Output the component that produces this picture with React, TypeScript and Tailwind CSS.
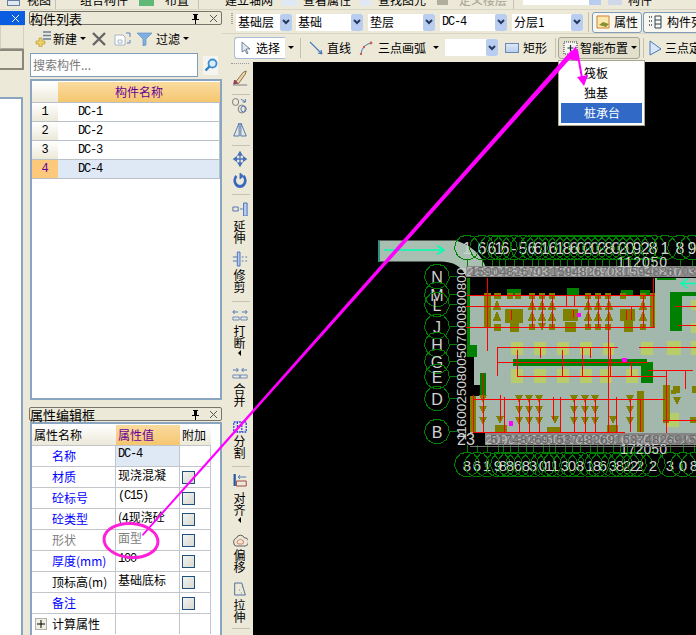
import type { ReactNode } from "react";

const CJK = "font-['Noto_Sans_CJK_SC','Liberation_Sans',sans-serif]";
const GREEN = "#008000";
const RED = "#ff0000";
const OLIVE = "#808000";
const PALE = "#b8cc6a";
const LABEL = "#d2d2d2";

const topAxis: [number, string][] = [
  [467, "1"], [482, "6"], [492, "6"], [499, "1"], [505, "6"], [514, "-"], [523, "5"], [532, "6"], [538, "6"], [545, "1"], [553, "6"], [560, "1"], [567, "8"],
  [574, "6"], [581, "0"], [588, "2"], [595, "0"], [602, "2"], [609, "8"], [616, "0"], [623, "2"], [630, "0"], [637, "9"], [645, "2"], [653, "8"], [665, "1"], [680, "8"], [692, "9"],
];
const bottomAxis: [number, string][] = [
  [467, "8"], [477, "6"], [487, "1"], [498, "9"], [503, "8"], [510, "8"], [518, "6"], [526, "8"], [533, "3"], [543, "0"], [549, "1"], [555, "1"], [565, "3"], [572, "0"],
  [580, "8"], [590, "1"], [597, "8"], [603, "6"], [613, "3"], [620, "8"], [627, "2"], [634, "2"], [640, "2"], [653, "2"], [670, "3"], [683, "0"], [694, "8"],
];
const leftAxis: [number, string][] = [
  [277, "N"], [295, "M"], [305, "L"], [327, "J"], [345, "H"], [362, "G"], [377, "E"], [399, "D"], [432, "B"],
];

// [x1, y1, x2, y2]
const redLines = [
  [467, 295.5, 655, 295.5], [466, 306.5, 652, 306.5], [675, 306.5, 696, 306.5], [466, 327.5, 655, 327.5], [678, 325.5, 696, 325.5],
  [487.5, 278, 487.5, 351], [653.5, 278, 653.5, 328], [608.5, 295, 608.5, 432], [498, 347.5, 618, 347.5], [639, 347.5, 696, 347.5],
  [532.5, 295, 532.5, 327], [542.5, 295, 542.5, 327], [552.5, 295, 552.5, 327], [511.5, 310, 511.5, 320], [566.5, 295, 566.5, 306],
  [588.5, 295, 588.5, 327], [598.5, 295, 598.5, 327], [643.5, 295, 643.5, 327], [631.5, 306, 631.5, 320], [626, 310, 626, 320],
  [574.5, 295, 574.5, 306], [573.5, 310, 573.5, 318], [497.5, 347, 497.5, 376], [540.5, 347, 540.5, 358], [590.5, 347, 590.5, 358],
  [498, 362.5, 648, 362.5], [517.5, 350, 517.5, 376], [517, 376.5, 666, 376.5], [666.5, 370, 666.5, 435], [648, 370.5, 693, 370.5],
  [473, 399.5, 665, 399.5], [473, 432.5, 625, 432.5], [473.5, 395, 473.5, 432], [483.5, 373, 483.5, 432], [500.5, 395, 500.5, 420],
  [504.5, 397, 504.5, 432], [553.5, 397, 553.5, 420], [560.5, 397, 560.5, 432], [519.5, 400, 519.5, 432], [529.5, 400, 529.5, 432],
  [539.5, 400, 539.5, 432], [574.5, 400, 574.5, 432], [585.5, 400, 585.5, 432], [595.5, 400, 595.5, 432], [608.5, 397, 608.5, 413],
  [616.5, 397, 616.5, 432], [630.5, 400, 630.5, 432], [640.5, 400, 640.5, 432], [663, 420.5, 696, 420.5], [685.5, 370, 685.5, 389],
  [562.5, 350, 562.5, 376], [582, 347, 582, 376], [610.5, 347, 610.5, 376], [631.5, 362, 631.5, 376],
];

// [x, y, w, h]
const greenRects = [
  [467, 278, 3, 68], [467, 345, 10, 12], [513, 359, 134, 7], [641, 362, 12, 21], [480, 373, 6, 23], [670, 292, 12, 39],
  [682, 292, 14, 4], [657, 278, 19, 2], [507, 289, 14, 6], [567, 288, 12, 7], [621, 290, 12, 5], [640, 290, 10, 5],
];
const paleRects = [
  [511, 342, 12, 13], [534, 342, 12, 13], [557, 342, 12, 13], [580, 342, 12, 13], [603, 343, 11, 12], [641, 342, 12, 13], [667, 341, 14, 14],
  [511, 369, 12, 14], [534, 369, 12, 14], [557, 369, 12, 14], [580, 369, 12, 14], [600, 369, 12, 14], [626, 369, 12, 14],
  [667, 413, 12, 14], [691, 300, 5, 10], [691, 323, 5, 10], [691, 341, 5, 14],
];
const oliveRects = [
  [484, 293, 7, 34], [494, 293, 7, 6], [494, 324, 7, 7], [507, 293, 6, 6], [515, 293, 6, 6], [529, 293, 6, 6], [539, 293, 6, 6], [549, 293, 6, 6],
  [585, 293, 6, 6], [595, 293, 6, 6], [605, 293, 6, 6], [620, 293, 6, 6], [640, 293, 6, 6], [650, 293, 5, 34], [529, 324, 6, 6], [549, 324, 6, 6],
  [585, 324, 6, 6], [595, 324, 6, 6], [605, 324, 6, 6], [640, 324, 6, 6], [505, 309, 18, 14], [510, 322, 9, 10], [563, 309, 15, 12],
  [565, 322, 11, 10], [620, 309, 15, 12], [624, 320, 9, 12], [470, 396, 6, 36], [637, 391, 7, 41], [495, 425, 12, 7], [547, 427, 13, 5],
  [607, 425, 11, 7], [663, 385, 7, 35], [673, 386, 7, 7], [692, 386, 4, 7], [690, 417, 6, 6], [663, 419, 6, 4], [671, 390, 5, 4],
];
const upTris = [[497, 305], [497, 316], [532, 305], [542, 305], [552, 305], [532, 316], [542, 316], [552, 316], [588, 305], [598, 305], [609, 305], [588, 316], [598, 316], [609, 316], [643, 305], [643, 316]];
const downTris = [
  [483, 399], [483, 410], [483, 421], [519, 399], [529, 399], [539, 399], [519, 410], [529, 410], [539, 410], [519, 421], [529, 421], [539, 421],
  [500, 420], [555, 420], [574, 399], [585, 399], [595, 399], [574, 410], [585, 410], [595, 410], [574, 421], [585, 421], [595, 421], [613, 420],
  [630, 399], [630, 410], [630, 421], [677, 401], [542, 327],
];

const polyPoints = (cx: number, cy: number, r: number) =>
  Array.from({ length: 11 }, (_, i) => {
    const a = (i / 11) * Math.PI * 2 - Math.PI / 2;
    return `${(cx + r * Math.cos(a)).toFixed(1)},${(cy + r * Math.sin(a)).toFixed(1)}`;
  }).join(" ");

const Plan = () => (
  <svg viewBox="253 62 443 573" className="block h-full w-full" shapeRendering="crispEdges">
    <rect x="253" y="62" width="443" height="573" fill="#000" />
    <g shapeRendering="auto">
      <path d="M378 241H456Q484 250 488 277H466Q460 262 440 262H378Z" fill="#a8bfb2" />
    </g>
    <polygon points="467,295 655,295 655,278 696,278 696,433 470,433 470,396 480,396 480,385 474,385 474,345 467,345" fill="#a3b8ac" />
    <rect x="378" y="241" width="2" height="21" fill="#2f8f7f" />
    {greenRects.map(([x, y, w, h], i) => <rect key={i} x={x} y={y} width={w} height={h} fill={GREEN} />)}
    {paleRects.map(([x, y, w, h], i) => <rect key={i} x={x} y={y} width={w} height={h} fill={PALE} />)}
    {oliveRects.map(([x, y, w, h], i) => <rect key={i} x={x} y={y} width={w} height={h} fill={OLIVE} />)}
    {upTris.map(([x, y], i) => <polygon key={i} points={`${x},${y - 5} ${x + 4},${y + 5} ${x - 4},${y + 5}`} fill={OLIVE} />)}
    {downTris.map(([x, y], i) => <polygon key={i} points={`${x - 4},${y - 4} ${x + 4},${y - 4} ${x},${y + 5}`} fill={OLIVE} />)}
    {redLines.map(([x1, y1, x2, y2], i) => <line key={i} x1={x1} y1={y1} x2={x2} y2={y2} stroke={RED} strokeWidth="1" />)}
    <rect x="577" y="313" width="4" height="4" fill="#ff00ff" />
    <rect x="622" y="358" width="5" height="4" fill="#ff00ff" />
    <rect x="509" y="421" width="4" height="5" fill="#ff00ff" />

    <path d="M384 250.5H443M437 246L444 250.5L437 255" stroke="#00ffb4" strokeWidth="1.5" fill="none" shapeRendering="auto" />
    <path d="M696 284H682M688 279L681 284L688 289" stroke="#00ffb4" strokeWidth="1.5" fill="none" shapeRendering="auto" />
    {topAxis.map(([x, t]) => (
      <g key={x}>
        <polygon points={polyPoints(x, 248, 12.5)} fill="none" stroke={GREEN} strokeWidth="1" />
        <line x1={x} y1="260" x2={x} y2="267" stroke={GREEN} strokeWidth="1" />
        <text x={x} y="254" textAnchor="middle" fontFamily="Liberation Sans" fontSize="16" fill={LABEL}>{t}</text>
      </g>
    ))}
    {bottomAxis.map(([x, t]) => (
      <g key={x}>
        <polygon points={polyPoints(x, 465, 12.5)} fill="none" stroke={GREEN} strokeWidth="1" />
        <line x1={x} y1="445" x2={x} y2="453" stroke={GREEN} strokeWidth="1" />
        <text x={x} y="471" textAnchor="middle" fontFamily="Liberation Sans" fontSize="15" fill={LABEL}>{t}</text>
      </g>
    ))}
    {leftAxis.map(([y, t]) => (
      <g key={y}>
        <polygon points={polyPoints(437, y, 12.5)} fill="none" stroke={GREEN} strokeWidth="1" />
        <line x1="449" y1={y} x2="457" y2={y} stroke={GREEN} strokeWidth="1" />
        <text x="437" y={y + 6} textAnchor="middle" fontFamily="Liberation Sans" fontSize="16" fill={LABEL}>{t}</text>
      </g>
    ))}
    <rect x="466" y="266" width="230" height="11" fill="#8a8a8a" />
    <text x="466" y="276" fontFamily="Liberation Sans" fontSize="12" fill="#c4c4c4" textLength="230" lengthAdjust="spacingAndGlyphs">2286006909807008009080963081009</text>
    <text x="470" y="276" fontFamily="Liberation Sans" fontSize="12" fill="#6a6a6a" textLength="226" lengthAdjust="spacingAndGlyphs">1590482670315948267031594826703</text>
    <text x="617" y="267" fontFamily="Liberation Sans" fontSize="14" fill={LABEL} textLength="50">112050</text>
    <rect x="485" y="433" width="211" height="12" fill="#858585" />
    <text x="485" y="444" fontFamily="Liberation Sans" fontSize="12" fill="#bcbcbc" textLength="211" lengthAdjust="spacingAndGlyphs">2090803060100800906030809020</text>
    <text x="490" y="444" fontFamily="Liberation Sans" fontSize="12" fill="#666" textLength="206" lengthAdjust="spacingAndGlyphs">5174826915374826915374826915</text>
    <text x="457" y="445" fontFamily="Liberation Sans" fontSize="16" fill={LABEL}>23</text>
    <text x="620" y="454" fontFamily="Liberation Sans" fontSize="14" fill={LABEL} textLength="47">172050</text>
    <line x1="470" y1="447" x2="696" y2="447" stroke="#777" strokeWidth="1" />
    <text transform="translate(466 441) rotate(-90)" fontFamily="Liberation Sans" fontSize="13" fill={LABEL} textLength="173" lengthAdjust="spacingAndGlyphs">11600250800507000800800</text>
  </svg>
);

const Sep = ({ className = "" }: { className?: string }) => <div className={`mx-[5px] h-[20px] w-px bg-[#c5c2b0] ${className}`} />;
const Caret = ({ className = "" }: { className?: string }) => (
  <span className={`inline-block h-0 w-0 border-x-[3px] border-t-[3px] border-x-transparent border-t-black ${className}`} />
);

const Combo = ({ label, w, mono }: { label: string; w: string; mono?: boolean }) => (
  <div className={`flex h-[17px] items-center justify-between bg-white ${w}`}>
    <span className={`pl-[2px] text-[12px] leading-none ${mono ? "font-['Liberation_Mono'] tracking-[-1.2px]" : ""}`}>{label}</span>
    <span className="flex h-[17px] w-[12px] items-center justify-center rounded-[2px] bg-[#b9cdf0]">
      <svg width="8" height="6" viewBox="0 0 8 6"><path d="M1 1l3 3 3-3" stroke="#23395f" strokeWidth="2" fill="none" /></svg>
    </span>
  </div>
);

const Grip = () => (
  <div className="flex h-[20px] w-[4px] flex-col gap-[1px] pt-[1px]">
    {[0, 1, 2, 3, 4, 5].map((i) => <span key={i} className="h-[1px] w-[2px] bg-[#a8a593]" />)}
  </div>
);

const PanelHeader = ({ title }: { title: string }) => (
  <div className="flex h-[14px] items-center justify-between rounded-[2px] border border-[#77756a] bg-[#ece9d8] pr-[3px]">
    <span className="text-[13px] leading-none">{title}</span>
    <span className="flex items-center gap-[9px]">
      <svg width="9" height="11" viewBox="0 0 9 11"><path d="M2 1h5v1H6v4h2v1H5v4H4V7H1V6h2V2H2z" fill="#000" /></svg>
      <svg width="9" height="9" viewBox="0 0 9 9"><path d="M1 1l7 7M8 1L1 8" stroke="#555" strokeWidth="1" /></svg>
    </span>
  </div>
);

const VTool = ({ icon, text, arrow, mt = "", tm = "mt-[3px]", am = "mt-[4px]" }: { icon: ReactNode; text?: string; arrow?: boolean; mt?: string; tm?: string; am?: string }) => (
  <div className={`flex flex-col items-center ${mt}`}>
    {icon}
    {text && (
      <div className={`flex flex-col items-center text-[12px] leading-[12px] ${tm}`}>
        {text.split("").map((c) => <span key={c}>{c}</span>)}
      </div>
    )}
    {arrow && <span className={`h-0 w-0 border-y-[3px] border-r-[3px] border-y-transparent border-r-black ${am}`} />}
  </div>
);

const HSep = ({ mt }: { mt: string }) => <div className={`ml-[2px] h-px w-[18px] bg-[#c5c2b0] ${mt}`} />;

const BLUE = "#4a72b8";
const toolIcon = (children: ReactNode, h = 16) => (
  <svg width="16" height={h} viewBox={`0 0 18 ${h}`} preserveAspectRatio="none" fill="none" stroke={BLUE} strokeWidth="1">{children}</svg>
);

const Tools = () => (
  <div className="flex w-[31px] flex-col items-center pl-[6px] pr-[2px] pt-[2px]">
    <div className="h-px w-[18px] border-t border-dotted border-[#999]" />
    <VTool mt="mt-[5px]" icon={toolIcon(<><path d="M4 13L13 3l3-1-1 3-8 10z" fill="#e8d7b0" stroke="#8a6d3b" /><path d="M1 16h16" stroke="#777" /><path d="M3 11l3 3-4 1z" fill="#b04060" stroke="#803050" /></>, 17)} />
    <HSep mt="mt-[8px]" />
    <VTool mt="mt-[2px]" icon={toolIcon(<><circle cx="4" cy="5" r="3.5" stroke="#777" /><circle cx="11" cy="12" r="4" stroke="#777" /><circle cx="13" cy="12" r="3" /><path d="M10 2l5 3M15 2v3h-3" /></>, 17)} />
    <VTool mt="mt-[7px]" icon={toolIcon(<><path d="M8 2L2 15h6zM10 2l6 13h-6z" /></>)} />
    <HSep mt="mt-[8px]" />
    <VTool mt="mt-[5px]" icon={toolIcon(<path d="M9 1v14M2 8h14M9 1L7 4h4zM9 15l-2-3h4zM2 8l3-2v4zM16 8l-3-2v4z" fill={BLUE} strokeWidth="1.4" />)} />
    <VTool mt="mt-[5px]" icon={toolIcon(<><path d="M5 4a6 6 0 1 0 8 0" stroke="#3a68c0" strokeWidth="3" /><path d="M9 1l4 3-4 3z" fill="#3a68c0" /></>)} />
    <HSep mt="mt-[6px]" />
    <VTool mt="mt-[7px]" tm="mt-[4px]" text="延伸" icon={toolIcon(<><path d="M13 1h4v13h-4z" fill="#b9cdf0" /><path d="M1 5h6v4H1zM9 7h3" /></>, 14)} />
    <VTool mt="mt-[7px]" tm="mt-[2px]" text="修剪" icon={toolIcon(<><path d="M6 1h3v14H6z" fill="#b9cdf0" /><path d="M1 6h5M1 10h5M11 6h2M11 10h2M15 6h2M15 10h2" /></>)} />
    <HSep mt="mt-[8px]" />
    <VTool mt="mt-[7px]" tm="mt-[4px]" am="mt-[1px]" text="打断" arrow icon={toolIcon(<><path d="M1 3h6M3 1L1 3l2 2M11 3h6M15 1l2 2-2 2" /><path d="M1 8h7v3H1zM10 8h7v3h-7z" stroke="#6a88b8" /></>, 12)} />
    <VTool mt="mt-[11px]" tm="mt-[4px]" text="合并" icon={toolIcon(<><path d="M1 3h6M5 1l2 2-2 2M17 3h-6M13 1l-2 2 2 2" /><path d="M1 8h8v3H1zM9 8h8v3H9z" stroke="#6a88b8" /></>, 12)} />
    <VTool mt="mt-[14px]" tm="mt-[1px]" text="分割" icon={toolIcon(<path d="M2 1h14v10H2zM6 1v10M11 1v10" strokeDasharray="2 1" strokeWidth="1.4" stroke="#2244dd" />, 13)} />
    <HSep mt="mt-[7px]" />
    <VTool mt="mt-[6px]" tm="mt-[5px]" am="mt-[1px]" text="对齐" arrow icon={toolIcon(<><path d="M3 1v12" stroke="#245a9c" strokeWidth="2.5" /><path d="M7 4h9M9 2L7 4l2 2" /><path d="M5 8h11v5H5z" stroke="#a04040" /></>, 14)} />
    <VTool mt="mt-[10px]" tm="mt-[2px]" text="偏移" icon={toolIcon(<><path d="M2 10a4 4 0 0 1 3-5 5 5 0 0 1 9 0 4 4 0 0 1 1 8H5a3 3 0 0 1-3-3z" stroke="#555" /><path d="M6 10a2 2 0 0 1 2-3 2 2 0 0 1 3 0 2 2 0 0 1 0 4H7z" stroke="#e07060" /></>, 14)} />
    <VTool mt="mt-[9px]" text="拉伸" icon={toolIcon(<><path d="M3 1h8l4 12H3z" stroke="#4a6a9a" /><path d="M8 8h1M10 11h1M11 5h1" stroke="#777" /></>, 14)} />
    <HSep mt="mt-[5px]" />
  </div>
);

const Check = () => <div className="h-[13px] w-[13px] border border-[#1c5180] bg-gradient-to-br from-[#f4f4f0] to-[#d8d8d0]" />;

const props = [
  { name: "名称", value: "DC-4", color: "text-[#0000ff]", sel: true, check: false, mono: true },
  { name: "材质", value: "现浇混凝", color: "text-[#0000ff]", check: true },
  { name: "砼标号", value: " (C15)", color: "text-[#0000ff]", check: true, mono: true },
  { name: "砼类型", value: "(4现浇砼", color: "text-[#0000ff]", check: true },
  { name: "形状", value: "面型", color: "text-[#808080]", check: true, gray: true },
  { name: "厚度(mm)", value: "100", color: "text-[#0000ff]", check: true, mono: true },
  { name: "顶标高(m)", value: "基础底标", color: "text-black", check: true },
  { name: "备注", value: "", color: "text-[#0000ff]", check: true },
];

const PropertyTable = () => (
  <div className="ml-[1px] mt-[1px] flex-1 overflow-hidden border-x-2 border-t-2 border-[#8aa5c0] bg-white pt-[1px]">
    <div className="grid w-[179px] grid-cols-[84px_64px_31px] text-[12px] leading-none">
      <div className="flex h-[20px] items-center bg-gradient-to-b from-white to-[#ece9d8] pl-[2px]">属性名称</div>
      <div className="flex h-[20px] items-center bg-gradient-to-b from-[#fadb9f] to-[#f5c66f] pl-[2px] text-[#660099]">属性值</div>
      <div className="flex h-[20px] items-center bg-gradient-to-b from-white to-[#ece9d8] pl-[2px]">附加</div>
      {props.map((p) => (
        <div key={p.name} className="contents">
          <div className={`flex h-[21px] items-center border-r border-t border-[#c2c6ca] pl-[20px] ${p.color}`}>{p.name}</div>
          <div className={`flex h-[21px] items-start border-r border-t border-[#c2c6ca] pl-[2px] pt-[2px] ${p.sel ? "bg-[#dfe8f5]" : ""} ${p.gray ? "text-[#808080]" : ""} ${p.mono ? "font-['Liberation_Mono'] tracking-[-1.2px]" : ""}`}>{p.value}</div>
          <div className="flex h-[21px] items-center border-r border-t border-[#c2c6ca] pl-[2px]">{p.check && <Check />}</div>
        </div>
      ))}
      <div className="flex h-[21px] items-center gap-[5px] border-r border-t border-[#c2c6ca] pl-[3px]">
        <span className="flex h-[12px] w-[12px] items-center justify-center border border-[#b0b0b0] bg-[#f1efe2]">
          <svg width="8" height="8" viewBox="0 0 8 8"><path d="M4 0v8M0 4h8" stroke="#000" /></svg>
        </span>
        计算属性
      </div>
      <div className="h-[21px] border-r border-t border-[#c2c6ca]" />
      <div className="h-[21px] border-r border-t border-[#c2c6ca]" />
    </div>
  </div>
);

const members = ["DC-1", "DC-2", "DC-3", "DC-4"];

const MemberPanel = () => (
  <div className="flex w-[193px] shrink-0 flex-col">
    <PanelHeader title="构件列表" />
    <div className="flex h-[27px] items-center pl-[5px] text-[12px] leading-none">
      <svg width="18" height="16" viewBox="0 0 18 16">
        <path d="M2 10h3V7h3v3h3v3H8v3H5v-3H2z" fill="#f0d060" stroke="#b09030" strokeWidth="0.6" />
        <path d="M9 1h8M9 4.5h8M9 8h8" stroke="#6a7f9a" strokeWidth="1.4" />
      </svg>
      <span className="ml-[1px]">新建</span>
      <Caret className="ml-[3px]" />
      <svg className="ml-[6px]" width="14" height="14" viewBox="0 0 14 14"><path d="M1 1l12 12M13 1L1 13" stroke="#666" strokeWidth="2.4" /></svg>
      <svg className="ml-[8px]" width="17" height="14" viewBox="0 0 17 14"><path d="M1 3h8l2 2v8H1z" fill="#fff" stroke="#a8b4c8" /><path d="M4 8h4v3H4z" fill="none" stroke="#a8b4c8" /><path d="M12 1h4v4M16 8v3h-3" stroke="#5a80c0" fill="none" /></svg>
      <svg className="ml-[6px]" width="15" height="14" viewBox="0 0 15 14"><path d="M0 1h15L9 7v6l-3 1V7z" fill="#7faee0" stroke="#5a88c0" strokeWidth="0.6" /></svg>
      <span className="ml-[4px]">过滤</span>
      <Caret className="ml-[3px]" />
    </div>
    <div className="flex h-[26px] items-center pl-[1px]">
      <div className="flex h-[24px] w-[168px] items-center border border-[#7f9db9] bg-white pl-[2px] text-[12px] leading-none text-[#7a7a7a]">搜索构件...</div>
      <div className="ml-[5px] flex h-[19px] w-[15px] items-center justify-center bg-[#f4f4f0]">
        <svg width="14" height="14" viewBox="0 0 14 14"><circle cx="8.5" cy="5.5" r="4" fill="#d8ecfa" stroke="#3f8fd0" strokeWidth="1.8" /><path d="M5.5 8.5L1.5 12.5" stroke="#2f7fc0" strokeWidth="2.4" /></svg>
      </div>
    </div>
    <div className="ml-[1px] mt-[1px] h-[321px] border-2 border-[#8aa5c0] bg-white pt-[1px]">
      <div className="grid w-[188px] grid-cols-[26px_162px] text-[12px] leading-none">
        <div className="h-[21px] border-b border-[#b9c0c8] bg-gradient-to-b from-white to-[#ece9d8]" />
        <div className="flex h-[21px] items-center justify-center border-b border-[#b9c0c8] bg-gradient-to-b from-[#fadb9f] to-[#f5c66f] text-[#660099]">构件名称</div>
        {members.map((m, i) => {
          const on = i === 3;
          return (
            <div key={m} className="contents">
              <div className={`flex h-[19px] items-center justify-center border-b border-[#b9c0c8] font-['Liberation_Mono'] ${on ? "bg-[#fcc97c] text-[#660099]" : "bg-gradient-to-b from-white to-[#ece9d8]"}`}>{i + 1}</div>
              <div className={`flex h-[19px] items-center border-b border-r border-[#b9c0c8] pl-[20px] font-['Liberation_Mono'] tracking-[-1.2px] ${on ? "bg-[#dfe8f5]" : ""}`}>{m}</div>
            </div>
          );
        })}
      </div>
    </div>
    <div className="mt-[7px]"><PanelHeader title="属性编辑框" /></div>
    <PropertyTable />
  </div>
);

const LeftStrip = () => (
  <div className="flex w-[29px] shrink-0 flex-col">
    <div className="flex h-[14px] w-[25px] items-center justify-end bg-[#0a5de0] pr-[5px]">
      <svg width="9" height="9" viewBox="0 0 9 9"><path d="M1 1l7 7M8 1L1 8" stroke="#fff" /></svg>
    </div>
    <div className="h-[24px] w-[24px] border border-[#d4d0c0] border-b-[#aca899] bg-[#ece9d8]" />
    <div className="h-[21px] w-[24px] border-2 border-[#8a887a] border-l-0 bg-[#ece9d8]" />
    <div className="h-[27px] w-[24px] bg-[#ece9d8]" />
    <div className="w-[23px] flex-1 border-r-2 border-t-2 border-[#8aa5c0] bg-white" />
  </div>
);

const TopStrip = () => (
  <div className="flex h-[10px] items-start overflow-hidden border-b border-[#d8d5c4] text-[12px] leading-[12px] [&>*]:shrink-0">
    <span className="ml-[7px] h-[6px] w-[13px] border border-[#6a7f9a] bg-[#dfe8f5]" />
    <span className="ml-[7px] -mt-[6px]">视图</span>
    <span className="ml-[4px] h-[10px] w-px bg-[#c5c2b0]" />
    <span className="ml-[24px] -mt-[6px]">组合构件</span>
    <span className="ml-[11px] h-[6px] w-[15px] bg-[#5fb878]" />
    <span className="ml-[11px] -mt-[6px]">布置</span>
    <span className="ml-[9px] h-[10px] w-px bg-[#c5c2b0]" />
    <span className="ml-[26px] -mt-[6px]">建立轴网</span>
    <span className="ml-[9px] h-[6px] w-[15px] bg-[#dfe8f5]" />
    <span className="ml-[6px] -mt-[6px]">查看属性</span>
    <span className="ml-[9px] h-[6px] w-[11px] bg-[#dfe8f5]" />
    <span className="ml-[7px] -mt-[6px]">查找图元</span>
    <span className="ml-[11px] h-[5px] w-[11px] bg-[#b0ae9f]" />
    <span className="ml-[11px] -mt-[6px] text-[#a5a396]">定义楼层</span>
    <span className="ml-[6px] h-[10px] w-px bg-[#c5c2b0]" />
    <span className="ml-[9px] flex h-[5px] w-[78px] justify-end bg-white"><span className="w-[12px] bg-[#b9cdf0]" /></span>
    <span className="ml-[7px] h-[5px] w-[14px] bg-[#cfd8e8]" />
    <span className="ml-[6px] -mt-[6px]">构件</span>
  </div>
);

const RowOne = () => (
  <div className="flex h-[23px] items-center border-b border-[#d8d5c4] pl-[9px]">
    <Grip />
    <div className="ml-[1px] flex items-center gap-[5px]">
      <Combo label="基础层" w="-mr-[1px] w-[56px]" />
      <Combo label="基础" w="w-[67px]" />
      <Combo label="垫层" w="w-[67px]" />
      <Combo label="DC-4" w="w-[67px]" mono />
      <Combo label="分层1" w="w-[71px]" />
    </div>
    <Sep className="ml-[5px] mr-[3px]" />
    <div className="flex h-[21px] w-[50px] shrink-0 items-center rounded-[3px] border border-[#7f9db9] bg-[#f7f6ef] pl-[3px] text-[12px] leading-none">
      <svg width="15" height="14" viewBox="0 0 15 14"><path d="M1 1h12v12H1z" fill="#fbe9b0" stroke="#d08030" /><path d="M3 10l4-3 6 2-3 3z" fill="#8a9030" /></svg>
      <span className="ml-[3px]">属性</span>
    </div>
    <div className="ml-[1px] flex h-[21px] flex-1 items-center overflow-hidden rounded-l-[3px] border border-r-0 border-[#7f9db9] bg-[#f7f6ef] pl-[4px] text-[12px] leading-none">
      <svg className="shrink-0" width="14" height="14" viewBox="0 0 14 14"><path d="M1 2h3M1 6h3M1 10h3" stroke="#345" strokeWidth="1.5" strokeDasharray="1 1" /><path d="M7 1h6v12H7zM7 5h6M7 9h6" fill="none" stroke="#345" /></svg>
      <span className="ml-[5px] whitespace-nowrap">构件列</span>
    </div>
  </div>
);

const RowTwo = () => (
  <div className="flex h-[27px] items-center pl-[12px] text-[12px] leading-none [&>*]:shrink-0">
    <div className="flex h-[22px] w-[51px] items-center rounded-l-[3px] border border-r-0 border-[#a8bcd8] bg-white pl-[6px]">
      <svg width="10" height="13" viewBox="0 0 10 13"><path d="M1 1v10l3-2 2 4 1-1-2-4h4z" fill="#dfe8f5" stroke="#5a6a80" strokeWidth="0.8" /></svg>
      <span className="ml-[5px]">选择</span>
    </div>
    <Caret className="ml-[3px]" />
    <Sep className="ml-[6px] mr-[8px]" />
    <svg width="14" height="14" viewBox="0 0 14 14"><path d="M1 1l12 12M13 13l-1-4M13 13l-4-1" stroke="#4a78b8" strokeWidth="1.1" fill="none" /></svg>
    <span className="ml-[4px]">直线</span>
    <svg className="ml-[8px]" width="14" height="14" viewBox="0 0 14 14"><path d="M2 13Q3 4 12 2" stroke="#4a78b8" fill="none" /><circle cx="12" cy="2" r="1.4" fill="#d06050" /><circle cx="5" cy="6" r="1.2" fill="#d06050" /><circle cx="2" cy="13" r="1.2" fill="#d06050" /></svg>
    <span className="ml-[5px]">三点画弧</span>
    <Caret className="ml-[7px]" />
    <div className="ml-[6px]"><Combo label="" w="w-[53px]" /></div>
    <span className="ml-[7px] h-[10px] w-[14px] border border-[#6a88b8] bg-gradient-to-b from-[#dfe8f5] to-[#b9cdf0]" />
    <span className="ml-[4px]">矩形</span>
    <Sep className="ml-[8px] mr-[2px]" />
    <div className="flex h-[22px] w-[82px] items-center rounded-[3px] border border-[#a8a593] bg-[#e2dfcd] pl-[4px]">
      <svg width="15" height="14" viewBox="0 0 15 14"><path d="M1 1h13v12H1z" fill="#f4f4f0" stroke="#333" strokeDasharray="1 1" /><path d="M7.5 4v6M4.5 7h6" stroke="#223" strokeWidth="1.2" /></svg>
      <span className="ml-[2px] whitespace-nowrap">智能布置</span>
      <Caret className="ml-[3px]" />
    </div>
    <Sep className="ml-[3px] mr-[3px]" />
    <svg className="ml-[1px]" width="15" height="16" viewBox="0 0 15 16"><path d="M2 1l11 8-11 6z" fill="#d8e6f8" stroke="#4a78b8" /></svg>
    <span className="ml-[2px] whitespace-nowrap">三点定</span>
  </div>
);

const Menu = () => (
  <div className="absolute left-[558px] top-[60px] flex h-[66px] w-[87px] flex-col border border-[#a8a593] bg-white p-[2px] text-[12px] leading-none">
    <div className="flex h-[19px] items-center pl-[23px]">筏板</div>
    <div className="flex h-[21px] items-center pl-[23px]">独基</div>
    <div className="flex h-[20px] items-center bg-[#3169c6] pl-[23px] text-white">桩承台</div>
  </div>
);

const Markup = () => (
  <svg className="pointer-events-none absolute inset-0" width="696" height="635" viewBox="0 0 696 635">
    <polygon points="142,534.5 143,536 575,53.5 571.5,50" fill="#ff00ff" />
    <polygon points="576,46 579,61 566,59" fill="#ff00ff" />
    <path d="M577 50L582 78" stroke="#ff00ff" strokeWidth="2" />
    <polygon points="577,77 588,75 584,86" fill="#ff00ff" />
    <ellipse cx="131" cy="540.5" rx="27" ry="17" transform="rotate(4 131 540.5)" fill="none" stroke="#ff20d8" strokeWidth="3" />
  </svg>
);

export default function App() {
  return (
    <div className={`relative flex h-[635px] w-[696px] flex-col overflow-hidden bg-[#ece9d8] text-black ${CJK}`}>
      <TopStrip />
      <div className="mt-[1px] flex min-h-0 flex-1">
        <LeftStrip />
        <MemberPanel />
        <div className="flex min-w-0 flex-1 flex-col">
          <RowOne />
          <RowTwo />
          <div className="flex min-h-0 flex-1">
            <Tools />
            <div className="min-w-0 flex-1"><Plan /></div>
          </div>
        </div>
      </div>
      <Menu />
      <Markup />
    </div>
  );
}
